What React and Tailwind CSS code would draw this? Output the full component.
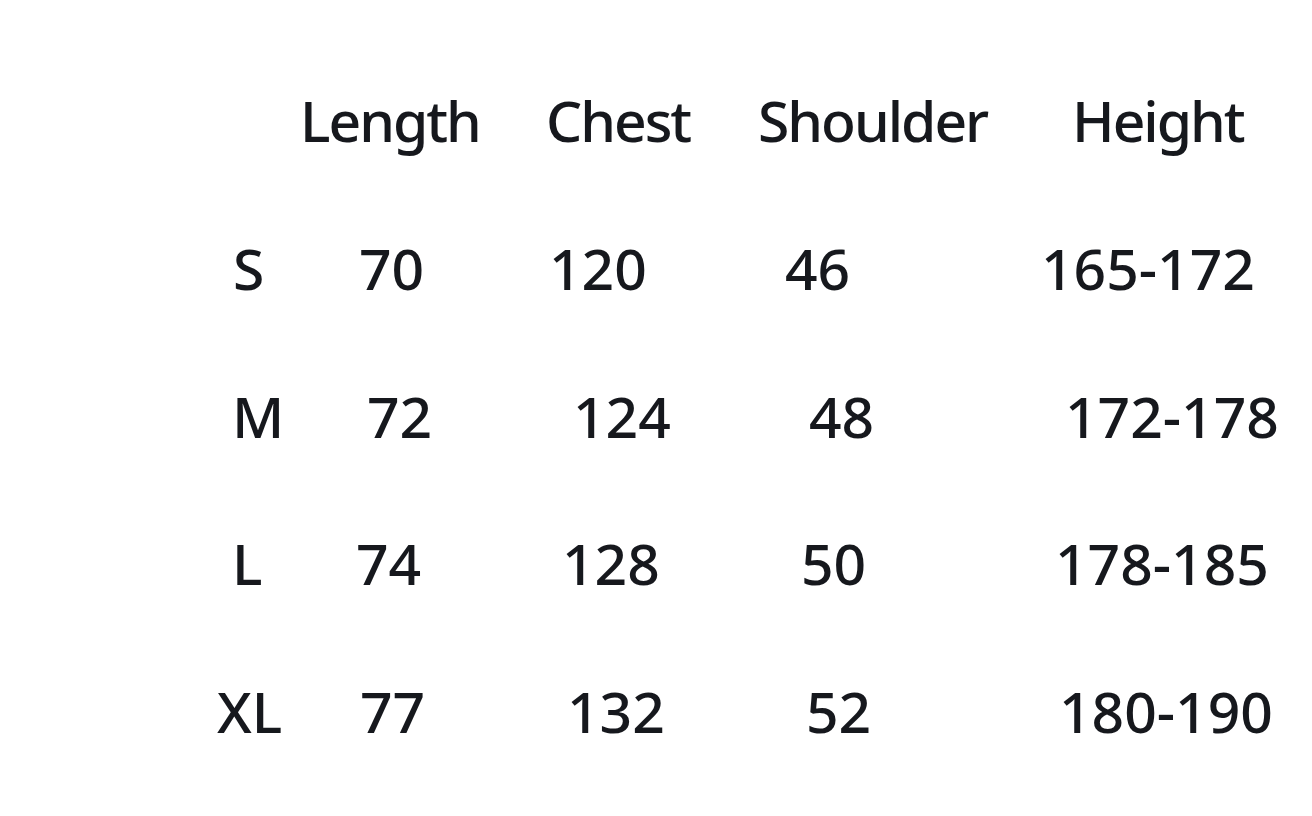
export default function App() {
  return (
    <div className="min-h-screen w-full bg-white text-[#16181d] font-['Noto_Sans',sans-serif] font-medium text-[57px] leading-none">
      <div className="flex flex-col gap-[90.75px] pt-[92px]">
        <div className="flex h-[57px] whitespace-nowrap tracking-[-2px]">
          <div className="w-[300px] shrink-0" />
          <div className="w-[246px] shrink-0">Length</div>
          <div className="w-[212px] shrink-0">Chest</div>
          <div className="w-[314px] shrink-0">Shoulder</div>
          <div className="shrink-0">Height</div>
        </div>
        <div className="flex h-[57px] whitespace-nowrap">
          <div className="w-[233px] shrink-0" />
          <div className="w-[126px] shrink-0">S</div>
          <div className="w-[190px] shrink-0">70</div>
          <div className="w-[236px] shrink-0">120</div>
          <div className="w-[256px] shrink-0">46</div>
          <div className="shrink-0">165-172</div>
        </div>
        <div className="flex h-[57px] whitespace-nowrap">
          <div className="w-[232px] shrink-0" />
          <div className="w-[135px] shrink-0">M</div>
          <div className="w-[206px] shrink-0">72</div>
          <div className="w-[236px] shrink-0">124</div>
          <div className="w-[256px] shrink-0">48</div>
          <div className="shrink-0">172-178</div>
        </div>
        <div className="flex h-[57px] whitespace-nowrap">
          <div className="w-[232px] shrink-0" />
          <div className="w-[124px] shrink-0">L</div>
          <div className="w-[206px] shrink-0">74</div>
          <div className="w-[239px] shrink-0">128</div>
          <div className="w-[254px] shrink-0">50</div>
          <div className="shrink-0">178-185</div>
        </div>
        <div className="flex h-[57px] whitespace-nowrap">
          <div className="w-[217px] shrink-0" />
          <div className="w-[143px] shrink-0">XL</div>
          <div className="w-[207px] shrink-0">77</div>
          <div className="w-[239px] shrink-0">132</div>
          <div className="w-[253px] shrink-0">52</div>
          <div className="shrink-0">180-190</div>
        </div>
      </div>
    </div>
  );
}
